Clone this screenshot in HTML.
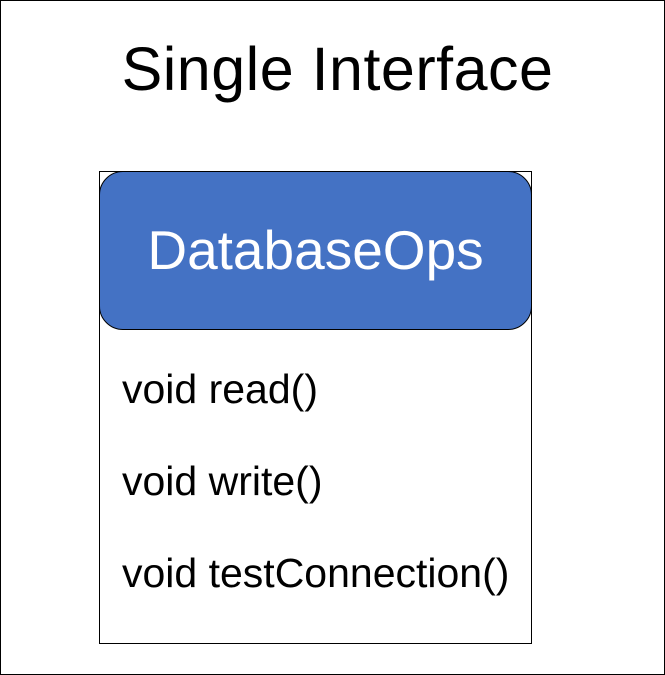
<!DOCTYPE html>
<html><head><meta charset="utf-8"><style>
html,body{margin:0;padding:0;background:#fff;}
body{width:665px;height:675px;position:relative;overflow:hidden;font-family:"Liberation Sans",sans-serif;}
.frame{position:absolute;left:0;top:0;width:663px;height:673px;border:1px solid #000;}
.title{position:absolute;left:0;width:655px;padding-left:10px;top:34px;text-align:center;font-size:61px;line-height:70px;color:#000;letter-spacing:0.5px;}
.box{position:absolute;left:99px;top:171px;width:431px;height:471px;border:1px solid #000;background:#fff;}
.head{position:absolute;left:99px;top:171px;width:431px;height:157px;border:1px solid #000;background:#4472C4;border-radius:24px;color:#fff;font-size:55px;text-align:center;line-height:157px;}
.m{position:absolute;left:122px;font-size:41px;line-height:44px;color:#000;}
</style></head><body>
<div class="frame"></div>
<div class="title">Single Interface</div>
<div class="box"></div>
<div class="head">DatabaseOps</div>
<div class="m" style="top:367px">void read()</div>
<div class="m" style="top:459px">void write()</div>
<div class="m" style="top:551px">void testConnection()</div>
</body></html>
